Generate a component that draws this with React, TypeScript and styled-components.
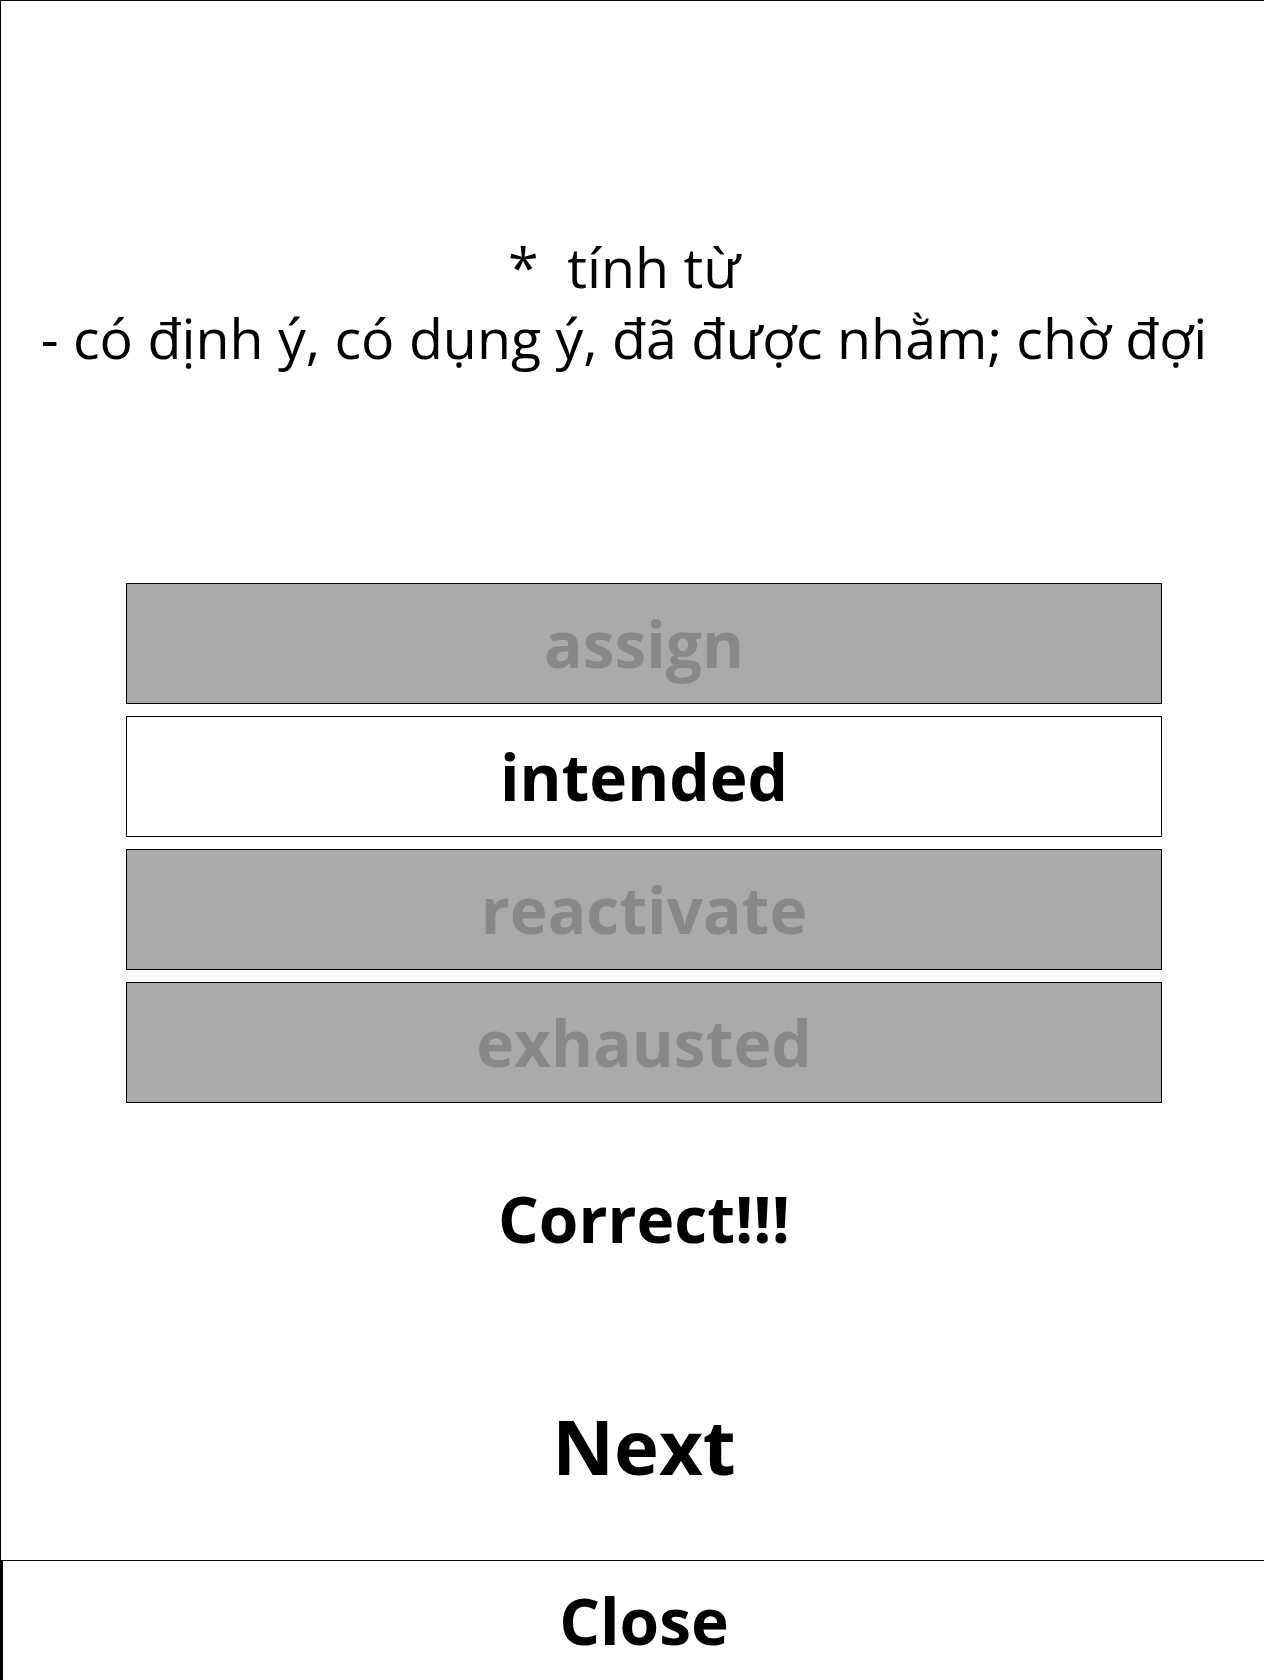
import React from "react";
import styled, { createGlobalStyle } from "styled-components";

const Global = createGlobalStyle`
  html, body { margin: 0; padding: 0; overflow: hidden; background: #fff; }
  body { font-family: "Open Sans", "Noto Sans", sans-serif; color: #000; }
`;

const Frame = styled.div`
  width: 1286px;
  min-height: 1680px;
  border-top: 1px solid #000;
  border-left: 1px solid #000;
  display: flex;
  flex-direction: column;
  align-items: center;
`;

const Prompt = styled.div`
  margin-top: 230px;
  padding-right: 40px;
  font-size: 55.5px;
  line-height: 71px;
  text-align: center;
  white-space: pre;
`;

const Options = styled.div`
  margin-top: 210px;
  width: 1036px;
  display: flex;
  flex-direction: column;
  gap: 12px;
`;

const Option = styled.div<{ $active?: boolean }>`
  box-sizing: border-box;
  height: 121px;
  border: 1px solid #000;
  background: ${(p) => (p.$active ? "#fff" : "#aaaaaa")};
  color: ${(p) => (p.$active ? "#000" : "#888888")};
  font-size: 64px;
  font-weight: 700;
  display: flex;
  align-items: center;
  justify-content: center;
`;

const Result = styled.div`
  margin-top: 72px;
  font-size: 64px;
  font-weight: 700;
  line-height: 1.362;
`;

const NextButton = styled.div`
  margin-top: 132px;
  font-size: 76px;
  font-weight: 700;
  line-height: 1.362;
`;

const CloseBar = styled.div`
  margin-top: 62px;
  align-self: stretch;
  border-top: 1px solid #000;
  border-left: 2px solid #000;
  padding-top: 16px;
  padding-bottom: 40px;
  padding-right: 2px;
  text-align: center;
  font-size: 64px;
  font-weight: 700;
  line-height: 1.362;
`;

const options = [
  { label: "assign", active: false },
  { label: "intended", active: true },
  { label: "reactivate", active: false },
  { label: "exhausted", active: false },
];

export default function App() {
  return (
    <>
      <Global />
      <Frame>
        <Prompt>{"*  tính từ\n- có định ý, có dụng ý, đã được nhằm; chờ đợi"}</Prompt>
        <Options>
          {options.map((o) => (
            <Option key={o.label} $active={o.active}>
              {o.label}
            </Option>
          ))}
        </Options>
        <Result>Correct!!!</Result>
        <NextButton>Next</NextButton>
        <CloseBar>Close</CloseBar>
      </Frame>
    </>
  );
}
